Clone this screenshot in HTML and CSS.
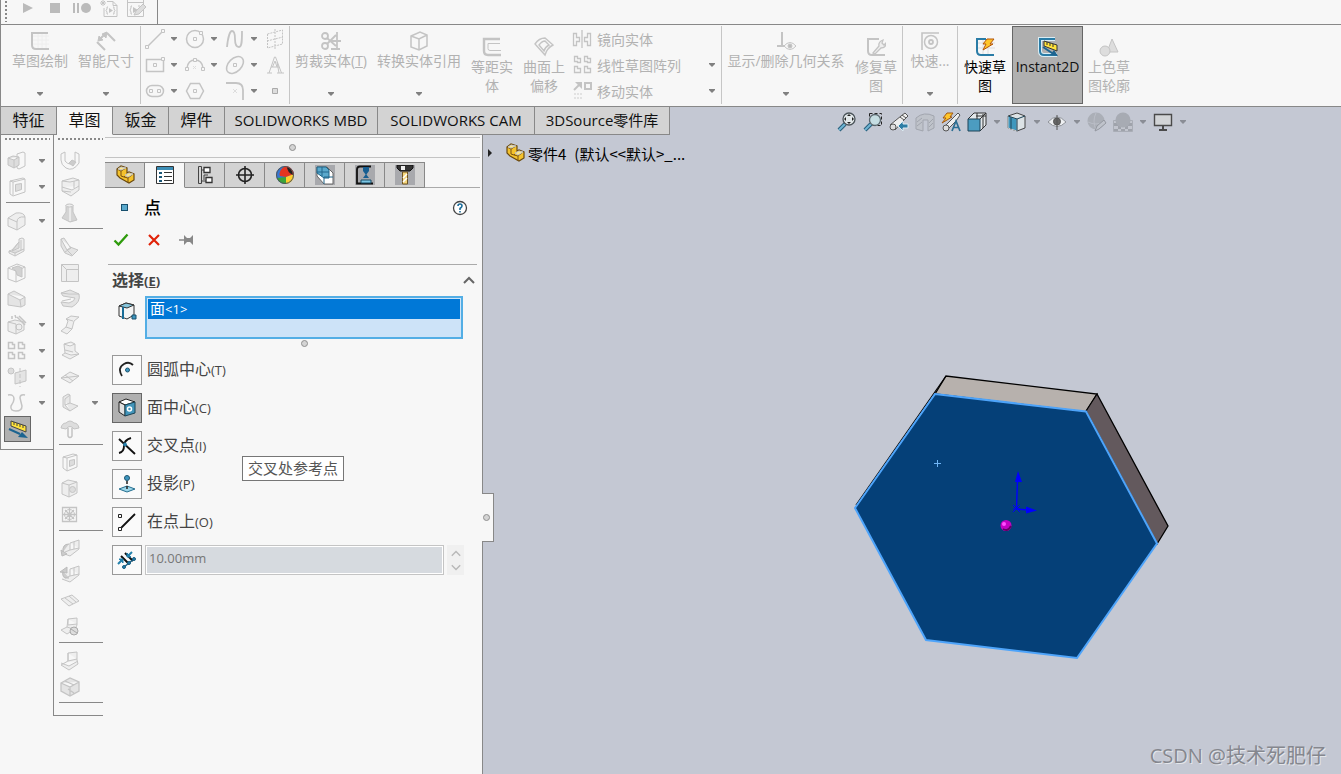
FILE: index.html
```html
<!DOCTYPE html>
<html lang="zh-CN">
<head>
<meta charset="utf-8">
<title>零件4</title>
<meta name="viewport" content="width=device-width, initial-scale=1">
<link rel="stylesheet" href="styles.css">
</head>
<body>
<svg class="defs" aria-hidden="true">
  <symbol id="caret" viewBox="0 0 6 4"><path d="M0 0h6v1L3 4 0 1z" fill="currentColor"/></symbol>
  <symbol id="part" viewBox="0 0 20 20"><path d="M2 4l4-3 6 2v5l2-1 5 2v6l-5 3-9-5-3-3z" fill="#f4c22c" stroke="#6b4a10" stroke-width="1.200"/><path d="M2 4l4 2 5-3M6 6v5l3 1 4-4M9 12l4 1 5-4M13 13v5" fill="none" stroke="#7a5312"/><path d="M3 4l3-2 5 1-5 2zM10 10l4-2 4 1-5 3z" fill="#fde88a"/></symbol>
</svg>

<header class="macro">
  <div class="macro-bar">
    <span class="grip-v"></span>
    <button class="tool" aria-label="运行"><svg class="i" viewBox="0 0 20 20"><path d="M5 3l10 5-10 5z" fill="#bbb" stroke="none"/></svg></button>
    <button class="tool" aria-label="停止"><svg class="i" viewBox="0 0 20 20"><path d="M5 3h10v10H5z" fill="#bbb" stroke="none"/></svg></button>
    <button class="tool" aria-label="录制"><svg class="i" viewBox="0 0 20 20"><path d="M1 3h2v10H1zM5 3h2v10H5z" fill="#bbb" stroke="none"/><circle cx="14" cy="8" r="5" fill="#bbb" stroke="none"/></svg></button>
    <button class="tool" aria-label="新建宏"><svg class="i" viewBox="0 0 20 20"><path d="M8 1.500h6l4 4v11H5V8M14 1.500v4h4M4 0v6M1 3h6M2 1l4 4M6 1L2 5M9 7H8v2l-1 1.500 1 1.500v2h1M14 7h1v2l1 1.500-1 1.500v2h-1"/><path d="M10 8l4 2.500-4 2.500z" fill="#c4c4c4" stroke="none"/></svg></button>
    <button class="tool" aria-label="编辑宏"><svg class="i" viewBox="0 0 20 20"><path d="M1.500 0v16.500h16V0M1 2.500h17M6 6H5v2l-1 2 1 2v2h1M12 6h2"/><path d="M7 7l5 3-5 3z" fill="#c4c4c4" stroke="none"/><path d="M8 15l2-4 7-7 3 3-7 7z" fill="#ddd"/></svg></button>
  </div>
</header>

<nav class="ribbon" aria-label="草图工具">
  <section class="group g-main">
    <button class="rb w66"><svg class="i" viewBox="0 0 20 20"><path d="M8 1v18M12 1v18M16 1v18M3 5h16M3 9h16M3 13h16" stroke="#eee"/><path d="M18 2H2v12q0 4 4 4h13" stroke-width="2"/></svg><span>草图绘制</span><svg class="c"><use href="#caret"/></svg></button>
    <button class="rb w66"><svg class="i" viewBox="0 0 20 20"><path d="M3 9l7-7M1 11l8 8M11 2l8 8" stroke-width="2"/><path d="M2 10l5-1-4-4zM11 1L6 3l4 4z" fill="#c4c4c4"/></svg><span>智能尺寸</span><svg class="c"><use href="#caret"/></svg></button>
  </section>
  <section class="group sketch-grid">
    <button class="sk"><svg class="i" viewBox="0 0 20 20"><path d="M3 17L17 3" stroke-width="1.500"/><path d="M.5 16.500h3v3h-3zM16.500 .5h3v3h-3z" fill="#f7f7f7"/></svg><svg class="c"><use href="#caret"/></svg></button>
    <button class="sk"><svg class="i" viewBox="0 0 20 20"><circle cx="10" cy="10" r="8.500" stroke-width="1.500"/><path d="M8.500 8.500h3v3h-3zM14.500 2.500h3v3h-3z" fill="#f7f7f7"/></svg><svg class="c"><use href="#caret"/></svg></button>
    <button class="sk"><svg class="i" viewBox="0 0 20 20"><path d="M2 18C3 8 5 2 7 2s3 3 3 8 1 8 4 8 3-6 3-16" stroke-width="1.800"/></svg><svg class="c"><use href="#caret"/></svg></button>
    <button class="sk"><svg class="i" viewBox="0 0 20 20"><path d="M2.500 5l15-4v14l-15 4zM10 0v20M2 12l16-4" stroke-dasharray="2 1"/></svg></button>
    <button class="sk"><svg class="i" viewBox="0 0 20 20"><path d="M1.500 4.500h17v12h-17z" stroke-width="1.500"/><path d="M8.500 8.500h3v3h-3zM16.500 2.500h3v3h-3z" fill="#f7f7f7"/></svg><svg class="c"><use href="#caret"/></svg></button>
    <button class="sk"><svg class="i" viewBox="0 0 20 20"><path d="M2 13q1-8 8-8t8 8" stroke-width="1.500"/><path d="M.5 12.500h3v3h-3zM16.500 12.500h3v3h-3zM8.500 3.500h3v3h-3z" fill="#f7f7f7"/><path d="M8 11l3 3M11 11l-3 3" stroke="#ddd"/></svg><svg class="c"><use href="#caret"/></svg></button>
    <button class="sk"><svg class="i" viewBox="0 0 20 20"><ellipse cx="10" cy="10" rx="10" ry="6.500" transform="rotate(-45 10 10)" stroke-width="1.500"/><path d="M8.500 8.500h3v3h-3z"/></svg><svg class="c"><use href="#caret"/></svg></button>
    <button class="sk"><svg class="i" viewBox="0 0 20 20"><path d="M2 18h5M12 18h7M4 18L9.500 2h1l6 16M6 12h8M12 7l2 11M7.500 12L10 6l2 6"/></svg></button>
    <button class="sk"><svg class="i" viewBox="0 0 20 20"><rect x="1.500" y="4.500" width="17" height="11" rx="5.500" stroke-width="1.500"/><path d="M4.500 8.500h3v3h-3zM12.500 8.500h3v3h-3z"/></svg><svg class="c"><use href="#caret"/></svg></button>
    <button class="sk"><svg class="i" viewBox="0 0 20 20"><path d="M5.500 2.500h9l4 7.500-4 7.500h-9L1.500 10z" stroke-width="1.500"/><path d="M8.500 8.500h3v3h-3z"/></svg></button>
    <button class="sk"><svg class="i" viewBox="0 0 20 20"><path d="M1 2h10q7 0 7 7v10" stroke-width="1.800"/><path d="M8 8l4 4M12 8l-4 4" stroke="#ddd"/></svg><svg class="c"><use href="#caret"/></svg></button>
    <button class="sk"><svg class="i" viewBox="0 0 20 20"><path d="M7.500 7.500h5v5h-5z" fill="#ddd" stroke="#aaa"/></svg></button>
  </section>
  <section class="group">
    <button class="rb w82"><svg class="i" viewBox="0 0 20 20"><circle cx="4" cy="5" r="3" stroke-width="1.800"/><circle cx="4" cy="15" r="3" stroke-width="1.800"/><path d="M6 7l9 8M6 13l9-9M10 10h10M16 1v18M10 18h9" stroke-width="1.800"/></svg><span>剪裁实体(<u>T</u>)</span><svg class="c"><use href="#caret"/></svg></button>
    <button class="rb w94"><svg class="i" viewBox="0 0 20 20"><path d="M2 5l9-4 7 3v11l-8 4-8-3zM2 5l8 3 8-4M10 8v11" stroke-width="1.500"/></svg><span>转换实体引用</span><svg class="c"><use href="#caret"/></svg></button>
    <button class="rb two w52"><svg class="i" viewBox="0 0 20 20"><path d="M18 2H2v12q0 4 4 4h13" stroke-width="2.400"/><path d="M18 6.500H6v5q0 2 2 2h11"/></svg><span>等距实<br>体</span></button>
    <button class="rb two w52"><svg class="i" viewBox="0 0 20 20"><path d="M1 7q4-6 10-6l8 7q-6 3-8 10zM5 8q3-4 6-4l4 4q-4 2-5 6z" stroke-width="1.400"/></svg><span>曲面上<br>偏移</span></button>
    <div class="stack">
      <button class="line"><svg class="i" viewBox="0 0 20 20"><path d="M10 1v18M1.500 4.500h3v4h3v4h-3v4h-3zM18.500 4.500h-3v4h-3v4h3v4h3z" stroke-width="1.300"/></svg><span>镜向实体</span></button>
      <button class="line"><svg class="i" viewBox="0 0 20 20"><path d="M2.500 1.500h3v2h3v4h-3v-1h-3zM12.500 1.500h3v2h3v4h-3v-1h-3zM2.500 11.500h3v2h3v4h-6zM12.500 11.500h3v2h3v4h-6z" stroke-width="1.300"/></svg><span>线性草图阵列</span><svg class="c"><use href="#caret"/></svg></button>
      <button class="line"><svg class="i" viewBox="0 0 20 20"><path d="M2 9l6-6" stroke-width="2"/><path d="M3 1h7v7z" fill="#c4c4c4" stroke="none"/><path d="M13 2h6v6h-6z" stroke-width="2"/><path d="M2 13h8M2 17h8" stroke-width="2" stroke-dasharray="2 1" stroke="#e2e2e2"/></svg><span>移动实体</span><svg class="c"><use href="#caret"/></svg></button>
    </div>
  </section>
  <section class="group">
    <button class="rb w128"><svg class="i" viewBox="0 0 20 20"><path d="M6 1v14M1 15h8" stroke-width="2"/><path d="M8 15q6-7 12 0-6 7-12 0z"/><circle cx="14" cy="15" r="2" fill="#bbb"/></svg><span>显示/删除几何关系</span><svg class="c"><use href="#caret"/></svg></button>
    <button class="rb two w52"><svg class="i" viewBox="0 0 20 20"><path d="M13 2H2v12q0 4 4 4h13" stroke-width="2"/><path d="M7 16l6-7q-1-4 4-6l-1 3 2 2 2-2q0 5-5 5l-6 6z" fill="#eee" stroke-width="1.300"/></svg><span>修复草<br>图</span></button>
  </section>
  <section class="group">
    <button class="rb w54"><svg class="i" viewBox="0 0 20 20"><path d="M2 19V2h17" stroke-width="1.600"/><circle cx="11" cy="11" r="6.500" stroke-width="1.500"/><circle cx="11" cy="11" r="2" stroke-width="1.800"/></svg><span>快速...</span><svg class="c"><use href="#caret"/></svg></button>
  </section>
  <section class="group last">
    <button class="rb two w54 on"><svg class="i" viewBox="0 0 20 20"><path d="M8 1v18M13 1v18M3 6h17M3 11h17" stroke="#ddd"/><path d="M11 2H2v12q0 4 4 4h13" stroke="#2a7ca6" stroke-width="2"/><path d="M12 2h7l-4 5h3L8 13l3-6H8z" fill="#ffc629" stroke="#b4540a"/></svg><span>快速草<br>图</span></button>
    <button class="rb two pressed"><svg class="i" viewBox="0 0 20 20"><path d="M17 2H2v12q0 4 4 4h13" stroke="#d9edf5" stroke-width="4"/><path d="M17 2H2v12q0 4 4 4h13" stroke="#2a7ca6" stroke-width="2"/><path d="M6 4l13 4v6L6 9z" fill="#ffe23b" stroke="#333"/><path d="M9 5v3M12 6v3M15 7v3" stroke="#333"/><path d="M5 10l9 6" stroke="#1c6490" stroke-width="2"/><path d="M12 18l8 1-4-6z" fill="#1c6490" stroke="none"/></svg><span>Instant2D</span></button>
    <button class="rb two w52"><svg class="i" viewBox="0 0 20 20"><path d="M13 2l6 13H8z" fill="#ddd"/><circle cx="6" cy="14" r="5" fill="#ddd"/></svg><span>上色草<br>图轮廓</span></button>
  </section>
</nav>

<div class="tabrow">
  <nav class="tabs" aria-label="命令选项卡">
    <button class="tab">特征</button><button class="tab active">草图</button><button class="tab">钣金</button><button class="tab">焊件</button><button class="tab mbd">SOLIDWORKS MBD</button><button class="tab cam">SOLIDWORKS CAM</button><button class="tab src">3DSource零件库</button>
  </nav>
  <div class="view-tools">
    <button class="tool" aria-label="整屏显示全图"><svg class="i" viewBox="0 0 20 20"><path d="M2 18l6-6" stroke="#285f7c" stroke-width="4"/><path d="M2 18l6-6" stroke="#6fb5d3" stroke-width="2"/><circle cx="12" cy="7" r="6" fill="#e2e8ea" stroke="#4b5459" stroke-width="1.300"/><path d="M12 2l2 2h-4zM12 12l2-2h-4zM7 7l2-2v4zM17 7l-2-2v4z" fill="#222" stroke="none"/></svg></button>
    <button class="tool" aria-label="局部放大"><svg class="i" viewBox="0 0 20 20"><path d="M6.500 1.500h12v12h-12z" stroke="#222" stroke-dasharray="3 2"/><path d="M2 18l6-6" stroke="#285f7c" stroke-width="4"/><path d="M2 18l6-6" stroke="#6fb5d3" stroke-width="2"/><circle cx="12" cy="8" r="5.500" fill="#c5dde2" stroke="#59666c" stroke-width="1.300"/></svg></button>
    <button class="tool" aria-label="上一视图"><svg class="i" viewBox="0 0 20 20"><path d="M1 13L12 4l4-3 3 3-4 4-9 10z" fill="#eee" stroke="#555"/><circle cx="4" cy="15" r="3" fill="#ddd" stroke="#555"/><path d="M11 5l4 3M13 3l4 3" stroke="#555"/><path d="M19 12h-5V9l-5 5 5 5v-3h5z" fill="#2c7da5" stroke="#dcebf2"/></svg></button>
    <button class="tool dim" aria-label="剖面视图"><svg class="i" viewBox="0 0 20 20"><path d="M1 6q8-7 18-2v12l-6 3V8H8v11l-7-2z" fill="#bfc2c9" stroke="#999da5"/><path d="M2 10l5-4M2 14l5-4M14 11l4-4M14 15l4-4" stroke="#999da5"/></svg></button>
    <button class="tool" aria-label="动态注解视图"><svg class="i" viewBox="0 0 20 20"><path d="M3 15L14 4l3-3 2 2-4 6-9 9z" fill="#eee" stroke="#555"/><circle cx="5" cy="16" r="3" fill="#ddd" stroke="#555"/><path d="M6 1h6l-3 4h2L1 11l4-5H2z" fill="#ffc629" stroke="#a15814"/><path d="M11 19l4-10 4 10M12.500 15.500h5" stroke="#2c6e93" stroke-width="1.700"/></svg></button>
    <button class="tool" aria-label="视图定向"><svg class="i" viewBox="0 0 20 20"><path d="M1 7l6-6h12v12l-6 6" fill="#e3e7ea" stroke="#333"/><path d="M1 7h12v12H1z" fill="#4c9cc0" stroke="#1e4559"/><path d="M13 7l6-6M10 1v6M16 2v14M9 4h10" stroke="#333"/></svg></button>
    <svg class="c"><use href="#caret"/></svg>
    <button class="tool" aria-label="显示样式"><svg class="i" viewBox="0 0 20 20"><path d="M1 4l9-3 8 3v12l-8 3-9-3z" fill="#dce2e5" stroke="#444"/><path d="M1 4l9 3v12l-9-3z" fill="#3f97bd"/><path d="M1 4l9 3 8-3M10 7v12M4 5v12" stroke="#1e4559"/></svg></button>
    <svg class="c"><use href="#caret"/></svg>
    <button class="tool" aria-label="隐藏/显示项目"><svg class="i" viewBox="0 0 20 20"><path d="M1 10q9-10 18 0-9 9-18 0z" fill="#eef0f2" stroke="#8d9198"/><circle cx="10" cy="9.500" r="3.500" fill="#666" stroke="#555"/><path d="M10 3v15" stroke="#555"/></svg></button>
    <svg class="c"><use href="#caret"/></svg>
    <button class="tool dim" aria-label="编辑外观"><svg class="i" viewBox="0 0 20 20"><circle cx="9" cy="9" r="8.500" fill="#a5a9b1" stroke="none"/><path d="M1 10q8 4 16 0M9 1q-4 8 0 17" stroke="#b9bcc4"/><path d="M8 19l2-5 7-6 2 3-7 6z" fill="#bfc2ca" stroke="#898d94"/></svg></button>
    <button class="tool dim" aria-label="应用布景"><svg class="i" viewBox="0 0 20 20"><path d="M.5 8.500h19v11H.5z" fill="#c2c5cd" stroke="#a3a7af"/><path d="M1 11h4v3H1zM15 11h4v3h-4zM5 14h3v3H5zM12 14h3v3h-3zM1 17h4v2H1zM8 17h4v2H8zM15 17h4v2h-4z" fill="#969aa2" stroke="none"/><circle cx="10" cy="8" r="7.500" fill="#a0a4ac" stroke="none"/></svg></button>
    <svg class="c"><use href="#caret"/></svg>
    <button class="tool" aria-label="视图设定"><svg class="i" viewBox="0 0 20 20"><path d="M1.500 2.500h17v11h-17z" fill="#d2d4d6" stroke="#4a4a4a" stroke-width="1.400"/><path d="M10 14v4M6 18h8" stroke="#4a4a4a" stroke-width="2"/></svg></button>
    <svg class="c"><use href="#caret"/></svg>
  </div>
</div>

<main class="work">
  <aside class="side">
    <div class="rail first" role="toolbar" aria-label="特征">
      <span class="grip"></span>
      <button class="rt"><svg class="i" viewBox="0 0 20 20"><path d="M10 3l6-2 2 1v13l-6 3-2-1z"/><path d="M1 7l5-2 6 1v8l-5 3-6-3zM1 7l6 2 5-3M7 9v8" fill="#ddd"/></svg><svg class="c"><use href="#caret"/></svg></button>
      <button class="rt"><svg class="i" viewBox="0 0 20 20"><path d="M3 4l13-3 2 1v13l-12 4-3-2zM6 5v13M3 4l3 1 12-3"/><path d="M8.500 7.500l6-1v6l-6 2z" fill="#ddd"/></svg><svg class="c"><use href="#caret"/></svg></button>
      <hr>
      <button class="rt"><svg class="i" viewBox="0 0 20 20"><path d="M1 7l8-5q8-1 9 4v8l-8 5-9-4zM1 7l9 4v8M10 11q0-6 8-5" fill="#eee"/></svg><svg class="c"><use href="#caret"/></svg></button>
      <button class="rt"><svg class="i" viewBox="0 0 20 20"><path d="M12 2l3-1 2 1v12l-9 5-6-3v-2l3-1 7-8z" fill="#eee"/><path d="M12 5v6l-7 3zM2 14l6 2 9-4M8 16v3M14 3v10" fill="#ddd"/></svg></button>
      <button class="rt"><svg class="i" viewBox="0 0 20 20"><path d="M1 5l9-4 8 3v11l-9 4-8-3zM1 5l8 3v11M9 8l9-4"/><path d="M5 5l6-2 4 2v9l-5-2-1-4z" fill="#d2d2d2"/></svg></button>
      <button class="rt"><svg class="i" viewBox="0 0 20 20"><path d="M1 5l6-3 11 6v8l-4 2-13-2zM1 5l12 6 5-3M13 11l1 7" fill="#e4e4e4"/></svg></button>
      <button class="rt"><svg class="i" viewBox="0 0 20 20"><path d="M1 7l7-2 9 2v8l-8 4-8-3zM1 7l8 2v10" fill="#eee"/><circle cx="12" cy="12" r="3"/><path d="M10 2l8 8M12 1l7 7M5 1v3M8 0l1 3" stroke-width="1.500"/></svg><svg class="c"><use href="#caret"/></svg></button>
      <button class="rt"><svg class="i" viewBox="0 0 20 20"><path d="M1.500 1.500h4v2h2v4h-6zM11.500 1.500h4v2h2v4h-6zM1.500 11.500h4v2h2v4h-6zM11.500 11.500h4v2h2v4h-6z" stroke-width="1.500"/></svg><svg class="c"><use href="#caret"/></svg></button>
      <button class="rt"><svg class="i" viewBox="0 0 20 20"><circle cx="4" cy="4" r="3" fill="#ddd"/><path d="M8 6l11-3v11L8 17z" fill="#e4e4e4"/><path d="M13 1v19" stroke-dasharray="4 2"/></svg><svg class="c"><use href="#caret"/></svg></button>
      <button class="rt"><svg class="i" viewBox="0 0 20 20"><path d="M1 2q6-1 6 4 0 3-3 7-1 5 5 5t6-5l-2-8q0-4 5-3" stroke-width="1.500"/></svg><svg class="c"><use href="#caret"/></svg></button>
      <button class="rt chosen" aria-label="Instant3D"><svg class="i" viewBox="0 0 20 20"><path d="M3 2l15 5v6L3 7z" fill="#ffe23b" stroke="#444"/><path d="M6 3v3M9 4v3M12 5v3M15 6v3" stroke="#444"/><path d="M1 10l11 5" stroke="#1c6490" stroke-width="2"/><path d="M10 18l10 1-6-6z" fill="#1c6490" stroke="none"/></svg></button>
    </div>
    <div class="rail second" role="toolbar" aria-label="钣金">
      <span class="grip"></span>
      <button class="rt"><svg class="i" viewBox="0 0 20 20"><path d="M1 3l4-2v9q5 6 10 0V1l4 2v9q-6 9-13 5-5-3-5-8z"/><path d="M9 12l3-3 4 2-3 4z" fill="#ccc"/></svg></button>
      <button class="rt"><svg class="i" viewBox="0 0 20 20"><path d="M2 4l11-3 6 2v10l-8 6-9-5zM2 4l8 1 9-2M2 10l10 3 7-4M14 4v7M2 14l9 1" fill="#eee"/></svg></button>
      <button class="rt"><svg class="i" viewBox="0 0 20 20"><path d="M6 2h7v7l4 8-7 2-8-4 4-6z" fill="#d4d4d4"/><path d="M10 3v15" stroke="#fff"/><ellipse cx="9.500" cy="2.500" rx="3.500" ry="1.500" fill="#eee"/></svg></button>
      <hr>
      <button class="rt"><svg class="i" viewBox="0 0 20 20"><path d="M1 2l3-1 6 9 8 3-6 6-7-3-4-7zM1 2l6 11 4-3M7 13l5 5M5 15l6-4" fill="#e4e4e4"/></svg></button>
      <button class="rt"><svg class="i" viewBox="0 0 20 20"><path d="M1.500 1.500h17v17h-17zM1.500 1.500l5 5M6.500 6.500h12M6.500 6.500v12" fill="#eee"/></svg></button>
      <button class="rt"><svg class="i" viewBox="0 0 20 20"><path d="M1 4l9-3 9 4q2 8-7 13l-9-1-2-4 8 1q6-2 6-5L3 7zM1 4l8 1 10 0M2 12l9-2" fill="#e4e4e4"/></svg></button>
      <button class="rt"><svg class="i" viewBox="0 0 20 20"><path d="M6 4l5-3 8 1-5 4-2 8-5 5-6-3 5-4 2-6zM6 4l7 2M6 12l6 2" fill="#eee"/></svg></button>
      <button class="rt"><svg class="i" viewBox="0 0 20 20"><path d="M4 3l7-2 4 2v7l4 3-9 5-8-4 3-2zM4 3l6 2 5-2M5 12l6 2 8-1M5 9l8 2" fill="#eee"/></svg></button>
      <button class="rt"><svg class="i" viewBox="0 0 20 20"><path d="M1 11l9-6 9 4-9 7zM5 8l8 6M1 11l18-2" fill="#eee"/></svg></button>
      <button class="rt"><svg class="i" viewBox="0 0 20 20"><path d="M3 4l5-3 2 1v8l8 3-8 5-7-4zM5 6l5-4M5 6v6l5 6M5 12l5-2" fill="#e8e8e8"/></svg><svg class="c"><use href="#caret"/></svg></button>
      <button class="rt"><svg class="i" viewBox="0 0 20 20"><path d="M1 9q1-5 5-5 4-4 8 0 4 0 5 5l-5 1q-4-5-8 0z" fill="#ddd"/><path d="M8 9v8q2 3 4 0V9" stroke-width="1.500"/></svg></button>
      <hr>
      <button class="rt"><svg class="i" viewBox="0 0 20 20"><path d="M3 4l10-3 4 1v12L7 18l-4-3zM7 5v13M3 4l4 1 10-3"/><path d="M9.500 7.500l5-1v5l-5 2z" fill="#ddd"/></svg></button>
      <button class="rt"><svg class="i" viewBox="0 0 20 20"><path d="M2 4l6-3 9 2v11l-8 4-7-3zM2 4l7 2v12M9 6l8-3" fill="#eee"/><circle cx="12.500" cy="10.500" r="3" fill="#ddd"/></svg></button>
      <button class="rt"><svg class="i" viewBox="0 0 20 20"><path d="M2.500 2.500h14v14h-14zM9.500 2.500v14M2.500 9.500h14M5 5l9 9M14 5l-9 9" stroke-width="1.300"/><circle cx="9.500" cy="9.500" r="5"/></svg></button>
      <hr>
      <button class="rt"><svg class="i" viewBox="0 0 20 20"><path d="M10 4l9-3v9l-9 7-8-3M10 4v7l9-2M10 11l-5 2M14 3v7" fill="#eee"/><path d="M9 5q-7 0-6 8M1 11l6 4-5 2z" fill="#ccc" stroke="#bbb"/></svg></button>
      <button class="rt"><svg class="i" viewBox="0 0 20 20"><path d="M10 4l9-3v9l-9 7-8-3M10 4v7l9-2M10 11l-5 2M14 3v7" fill="#eee"/><path d="M9 13Q1 14 3 6M0 7l7-5v6z" fill="#ccc" stroke="#bbb"/></svg></button>
      <button class="rt"><svg class="i" viewBox="0 0 20 20"><path d="M1 8l11-4 7 6-10 5zM5 7l8 6M9 5l7 6" fill="#eee"/></svg></button>
      <button class="rt"><svg class="i" viewBox="0 0 20 20"><path d="M8 2l9-1v7l-2 4-8 5-6-4 6-3zM8 2v6l9-1M7 10l6 2" fill="#eee"/><circle cx="14" cy="14" r="4" fill="#ddd" stroke="#aaa"/><path d="M11 12l6 4" stroke="#aaa"/></svg></button>
      <hr>
      <button class="rt"><svg class="i" viewBox="0 0 20 20"><path d="M8 2l9-1v8l1 4-9 6-8-5 7-4zM8 2v8l9-2M1 12l8 3 9-5" fill="#eee"/></svg></button>
      <button class="rt"><svg class="i" viewBox="0 0 20 20"><path d="M1 6l9-5 9 4v9l-9 5-9-5zM1 6l9 4 9-5M10 10v9M5 4l9 4M8 12l6 4" fill="#e4e4e4" stroke-width="1.300"/></svg></button>
      <hr>
    </div>

    <section class="panel">
      <div class="splitter"><span class="dot"></span></div>
      <nav class="ptabs" aria-label="管理器">
        <button class="ptab" aria-label="特征管理器"><svg class="i"><use href="#part"/></svg></button>
        <button class="ptab active" aria-label="属性管理器"><svg class="i" viewBox="0 0 20 20"><path d="M1.500 1.500h17v17h-17z" fill="#fff" stroke="#333"/><path d="M2 2h16v3H2z" fill="#3b8db5" stroke="none"/><path d="M4 8h3M4 12h3M4 16h3" stroke="#1c5878" stroke-width="2"/><path d="M9 7.500h8M9 11.500h8M9 15.500h8" stroke="#333"/></svg></button>
        <button class="ptab" aria-label="配置管理器"><svg class="i" viewBox="0 0 20 20"><path d="M3.500 1.500h3v17h-3zM6 5h4M6 16h6M13 10H9v5" stroke="#444"/><path d="M9 2.500h6v5H9zM11 12.500h6v5h-6z" fill="#fff" stroke="#333" stroke-width="1.300"/></svg></button>
        <button class="ptab" aria-label="尺寸专家"><svg class="i" viewBox="0 0 20 20"><circle cx="10" cy="10" r="6.500" stroke="#222" stroke-width="1.600"/><path d="M10 1v18M1 10h18" stroke="#222" stroke-width="1.600"/></svg></button>
        <button class="ptab" aria-label="外观管理器"><svg class="i" viewBox="0 0 20 20"><circle cx="10" cy="10" r="9" fill="#3478d4" stroke="none"/><path d="M10 1q-7 5-5 10l6 1 8-3q-2-8-9-8z" fill="#e43520" stroke="none"/><path d="M2 13l9-1 1 7Q4 19 2 13z" fill="#3ba53a" stroke="none"/><path d="M11 12l8-3q0 9-8 10z" fill="#ffcf2e" stroke="none"/><path d="M12 2q5 1 6 8-6-3-6-8z" fill="#222" stroke="none"/><circle cx="10" cy="10" r="8.500" stroke="#555"/></svg></button>
        <button class="ptab" aria-label="CAM 特征树"><svg class="i" viewBox="0 0 20 20"><path d="M0 0h20v20H0z" fill="#a8a9ad" stroke="none"/><path d="M2 2h10l6 6v11H9L2 11z" fill="#fff" stroke="#666"/><path d="M2 2h9l3 3v8H9L2 8z" fill="#5aa9cc" stroke="#1c6488"/><path d="M7 2v9M2 7h12M9 19v-7h9" stroke="#23668b"/></svg></button>
        <button class="ptab" aria-label="CAM 操作树"><svg class="i" viewBox="0 0 20 20"><path d="M0 0h20v20H0z" fill="#a8a9ad" stroke="none"/><path d="M16 1.500H5q-3 0-3 3v14h16" stroke="#111" stroke-width="1.800"/><path d="M8 2h6v4l-3 4-3-4z" fill="#175e91" stroke="none"/><path d="M11 9l3 4H8z" fill="#175e91" stroke="none"/><path d="M6 15h10v3H6z" fill="#7bc6e4" stroke="#1a4d66"/></svg></button>
        <button class="ptab" aria-label="CAM 刀具树"><svg class="i" viewBox="0 0 20 20"><path d="M0 0h20v20H0z" fill="#a8a9ad" stroke="none"/><path d="M2 0h16v3l-3 3H5L2 3z" fill="#333" stroke="#111"/><path d="M6 1h4v4H6z" fill="#eee" stroke="none"/><path d="M7.500 7h5v12h-5z" fill="#f6d77b" stroke="#705522"/><path d="M8 13l4-4M8 17l4-4" stroke="#fff" stroke-width="1.500"/></svg></button>
      </nav>
      <header class="ptitle"><span class="pt"></span><h1>点</h1><button class="tool" aria-label="帮助"><svg class="i" viewBox="0 0 20 20"><circle cx="10" cy="10" r="6.500" fill="#fff" stroke="#444" stroke-width="1.300"/><path d="M8 8q0-2 2-2t2 2q0 1-2 2.500V12M10 13v1.500" stroke="#1b6e9c" stroke-width="1.600"/></svg></button></header>
      <div class="actions">
        <button class="tool" aria-label="确定"><svg class="i" viewBox="0 0 20 20"><path d="M3.500 10.500l4 4 9-10" stroke="#2e9b0c" stroke-width="2.300"/></svg></button>
        <button class="tool" aria-label="取消"><svg class="i" viewBox="0 0 20 20"><path d="M5 5l10 10M15 5L5 15" stroke="#e02208" stroke-width="2.200"/></svg></button>
        <button class="tool" aria-label="保持可见"><svg class="i" viewBox="0 0 20 20"><path d="M2 10h6" stroke="#888" stroke-width="1.500"/><path d="M7 5l3 3h3l3-3v10l-3-3h-3l-3 3z" fill="#888" stroke="none"/></svg></button>
      </div>
      <section class="select">
        <button class="sect"><span>选择<small>(<u>E</u>)</small></span><svg class="i chev" viewBox="0 0 20 20"><path d="M5 12l5-5 5 5" stroke="#666" stroke-width="2"/></svg></button>
        <div class="pick">
          <svg class="i" viewBox="0 0 20 20"><path d="M2 5l7-3 8 2v10l-7 4-8-3z" fill="#f4f4f4" stroke="#333"/><path d="M2 5l7-3 8 2-7 3z" fill="#86c5dc" stroke="#333"/><path d="M6 6v12" stroke="#186b96" stroke-width="2"/><path d="M15 14h4v4h-4z" fill="#3e96bf" stroke="#184f6b"/></svg>
          <div class="listbox" role="listbox" aria-label="选择" tabindex="0"><div class="item" role="option" aria-selected="true">面<small>&lt;1&gt;</small></div></div>
        </div>
        <span class="dot mini"></span>
        <div class="options">
          <button class="option"><span class="box"><svg class="i" viewBox="0 0 20 20"><path d="M5 16Q0 8 7 4q5-3 9 1" stroke="#222" stroke-width="1.800"/><circle cx="10.500" cy="10" r="2" fill="#3e96bf" stroke="#1d5570"/></svg></span><span>圆弧中心<small>(T)</small></span></button>
          <button class="option sel"><span class="box"><svg class="i" viewBox="0 0 20 20"><path d="M2 4l7-3 9 3-10 3z" fill="#fff" stroke="#222"/><path d="M2 4l6 3v11l-6-4z" fill="#e2e2e2" stroke="#222"/><path d="M8 7l10-3v11l-10 3z" fill="#4395ba" stroke="#1b4456"/><circle cx="12.500" cy="11" r="2" fill="#4395ba" stroke="#fff" stroke-width="1.500"/></svg></span><span>面中心<small>(C)</small></span></button>
          <button class="option"><span class="box"><svg class="i" viewBox="0 0 20 20"><path d="M2 3l16 15M2 17q5-1 5-7t7-8" stroke="#111" stroke-width="1.900"/><circle cx="8" cy="8.500" r="1.500" fill="#2981ad" stroke="#2981ad"/></svg></span><span>交叉点<small>(I)</small></span></button>
          <button class="option"><span class="box"><svg class="i" viewBox="0 0 20 20"><path d="M2 15l8-3 8 3-8 3z" fill="#9cd6e9" stroke="#256f90"/><path d="M10 7v9" stroke="#222" stroke-width="1.500" stroke-dasharray="3 2"/><circle cx="10" cy="4" r="2.500" fill="#3e96bf" stroke="#1d5570"/></svg></span><span>投影<small>(P)</small></span></button>
          <button class="option"><span class="box"><svg class="i" viewBox="0 0 20 20"><path d="M4 16L18 2" stroke="#111" stroke-width="1.800"/><path d="M1.500 2.500h3v3h-3zM1.500 15.500h3v3h-3z" fill="#fff" stroke="#222"/></svg></span><span>在点上<small>(O)</small></span></button>
          <div class="distance">
            <button class="box" aria-label="沿曲线距离"><svg class="i" viewBox="0 0 20 20"><path d="M4 6l8 8M8 3l8 8" stroke="#111" stroke-width="2"/><path d="M7 17l10-8" stroke="#175c82" stroke-width="1.500"/><path d="M1 14l4-4M11 6l4-4" stroke="#2380ab" stroke-width="2"/><path d="M2 9h4v4zM10 3v4h4z" fill="#2380ab" stroke="#2380ab"/><g fill="#2380ab" stroke="#175c82"><circle cx="7" cy="17" r="1.500"/><circle cx="12" cy="13" r="1.500"/><circle cx="17" cy="9" r="1.500"/></g></svg></button>
            <input class="dist" type="text" value="10.00mm" aria-label="距离" disabled>
            <div class="spin"><button aria-label="增加"><svg class="i" viewBox="0 0 10 10"><path d="M2 7l3-3 3 3"/></svg></button><button aria-label="减少"><svg class="i" viewBox="0 0 10 10"><path d="M2 3l3 3 3-3"/></svg></button></div>
          </div>
        </div>
      </section>
      <div class="tip" role="tooltip">交叉处参考点</div>
    </section>
    <button class="handle" aria-label="折叠面板"><span class="dot"></span></button>
  </aside>

  <section class="viewport" aria-label="图形区域">
    <a class="tree" href="#"><svg class="arrow" viewBox="0 0 4 8"><path d="M0 0l4 4-4 4z" fill="#222"/></svg><svg class="i"><use href="#part"/></svg><span>零件4</span><span>(默认&lt;&lt;默认&gt;_...</span></a>
    <svg class="model" viewBox="853 373 318 288" role="img" aria-label="六棱柱">
      <path d="M935 394l11-18 151 18-11 18z" fill="#b7b1ad" stroke="#000" stroke-width="1.300"/>
      <path d="M1086 411l11-17 71 132-11 18z" fill="#63595d" stroke="#000" stroke-width="1.300"/>
      <path d="M946 376L856 505" stroke="#000" stroke-width="1.200"/>
      <path d="M935 394l151 17.500 71 132L1077 658l-151-18-71-132z" fill="#054078" stroke="#4ea4fa" stroke-width="2"/>
      <path d="M934 463.500h7M937.500 460v7" stroke="#6fb4f5"/>
      <path d="M1016.500 509l1-30M1016.500 509l12 1" stroke="#00f" stroke-width="1.400"/>
      <path d="M1018 471l4 11h-7zM1037 510.500l-11-4v7z" fill="#00f"/>
      <path d="M1013 509h7M1013 505l7 7M1020 505l-7 7" stroke="#00f"/>
      <circle cx="1006" cy="525.500" r="5.500" fill="#c300c3"/><circle cx="1004" cy="524" r="2" fill="#ff4dff"/><path d="M1003 529q5 3 8-3" stroke="#640064" stroke-width="2" fill="none"/>
    </svg>
    <div class="mark">CSDN @技术死肥仔</div>
  </section>
</main>
</body>
</html>
```
FILE: styles.css
```css
* { box-sizing: border-box; }
body {
  margin: 0;
  min-height: 100vh;
  display: flex;
  flex-direction: column;
  background: #f7f7f7;
  color: #222;
  font: 14px/19px "Open Sans", "Noto Sans CJK SC", sans-serif;
}
button {
  margin: 0;
  padding: 0;
  border: 0;
  background: none;
  color: inherit;
  font: inherit;
}
h1 { margin: 0; }
hr { margin: 2px 0 5px 5px; border: 0; height: 1px; background: #888; }
.defs { position: absolute; width: 0; height: 0; }
.i { display: block; flex: none; width: 20px; height: 20px; fill: none; stroke: #c4c4c4; }
.c { display: block; flex: none; width: 6px; height: 4px; color: #808080; }
.tool { display: flex; flex: none; }
.dot { width: 7px; height: 7px; border: 1px solid #909090; border-radius: 50%; background: #d4d4d4; }

.macro { border-bottom: 1px solid #888; }
.macro-bar {
  display: flex;
  align-items: flex-start;
  gap: 7px;
  width: 158px;
  height: 24px;
  border-left: 1px solid #888;
  border-right: 1px solid #888;
}
.grip-v {
  width: 4px;
  height: 22px;
  margin: 0 3px 0 3px;
  background: radial-gradient(circle, #888 1px, transparent 1px) 0 0 / 4px 4px;
}

.ribbon {
  display: flex;
  height: 82px;
  padding: 1px 0 2px 6px;
  border-left: 1px solid #888;
  border-bottom: 1px solid #888;
  color: #b2b2b2;
}
.group { display: flex; flex: none; border-right: 1px solid #c6c6c6; }
.g-main { padding-right: 1px; }
.last { border: 0; }
.rb { display: flex; flex-direction: column; align-items: center; flex: none; padding: 5px 0 8px; white-space: nowrap; }
.rb > .c { margin-top: auto; }
.rb.two { padding-top: 11px; }
.w66 { width: 66px; }
.w82 { width: 82px; }
.w94 { width: 94px; }
.w52 { width: 52px; }
.w54 { width: 54px; }
.w128 { width: 128px; }
.on { color: #000; }
.rb.pressed { width: 71px; padding-top: 10px; border: 1px solid #666; background: #b0b0b0; color: #111; }
.sketch-grid { display: grid; grid-template-columns: 40px 40px 40px 24px; grid-auto-rows: 26px; padding-left: 4px; }
.sk { display: flex; align-items: center; gap: 6px; }
.stack { display: flex; flex-direction: column; width: 151px; padding-left: 2px; }
.line { display: flex; align-items: center; gap: 5px; height: 26px; padding-right: 6px; }
.line .c { margin-left: auto; }

.tabrow { display: flex; justify-content: space-between; height: 28px; background: #c4c8d3; }
.tabs { display: flex; border-left: 1px solid #888; }
.tab {
  min-width: 56px;
  border-right: 1px solid #888;
  border-bottom: 1px solid #888;
  background: #d3d3d3;
  color: #111;
  font-size: 16px;
  white-space: nowrap;
}
.tab.active { background: #f7f7f7; border-bottom-color: #f7f7f7; }
.mbd { width: 153px; font-size: 15px; }
.cam { width: 157px; font-size: 15px; }
.src { width: 135px; font-size: 15px; }
.view-tools { display: flex; align-items: center; gap: 6px; margin-right: 154px; padding-top: 1px; }
.view-tools .c { margin: 0 1px; color: #8a8d95; }
.dim { opacity: 0.8; }

.work { display: flex; flex: 1; }
.side { position: relative; display: flex; align-items: flex-start; flex: none; width: 483px; border-right: 1px solid #888; }
.rail { display: flex; flex-direction: column; flex: none; border-left: 1px solid #888; border-bottom: 1px solid #888; }
.first { width: 53px; padding: 0 3px 7px 0; }
.second { width: 50px; padding-bottom: 7px; }
.grip {
  height: 4px;
  margin: 2px 0 7px 3px;
  background: radial-gradient(circle, #888 1px, transparent 1px) 0 0 / 4px 4px;
}
.rt { display: flex; align-items: center; gap: 12px; height: 26px; padding-left: 6px; }
.chosen { width: 27px; margin-left: 3px; padding-left: 3px; border: 1px solid #666; background: #b0b0b0; }

.panel { position: relative; flex: 1; margin: 2px 2px 0; }
.splitter { display: flex; justify-content: center; align-items: center; height: 21px; border-top: 1px solid #c4c4c4; border-bottom: 1px solid #c4c4c4; }
.ptabs { display: flex; margin-top: 4px; height: 26px; box-shadow: inset 0 -1px #aaa; }
.ptab {
  display: flex;
  justify-content: center;
  align-items: center;
  width: 40px;
  border: 1px solid #888;
  border-left: 0;
  background: #d3d3d3;
}
.ptab.active { background: #f7f7f7; border-bottom-color: #f7f7f7; }
.ptitle { display: flex; align-items: center; height: 39px; padding: 0 10px 0 16px; }
.pt { width: 7px; height: 7px; border: 1px solid #174f6d; background: #5aa9cc; }
.ptitle h1 { flex: 1; padding-left: 16px; font-size: 17px; font-weight: 500; color: #000; }
.actions { display: flex; gap: 13px; height: 37px; padding: 3px 0 0 6px; }
.select { margin: 0 3px; border-top: 1px solid #aaa; }
.sect { display: flex; justify-content: space-between; align-items: center; width: 100%; padding: 6px 0 5px 4px; color: #444; font-size: 16px; font-weight: 700; text-align: left; }
small { font-size: 13px; }
.chev { margin-right: -2px; }
.pick { display: flex; padding: 0 14px 0 9px; gap: 8px; }
.pick > .i { margin-top: 5px; }
.listbox { flex: 1; height: 43px; padding: 1px; border: 2px solid #53aee5; background: #cde3f8; }
.item { height: 20px; padding-left: 2px; background: #0078d7; color: #fff; font-size: 15px; line-height: 18px; }
.mini { display: block; margin: 1px auto 0 193px; }
.options { display: flex; flex-direction: column; gap: 8px; padding: 8px 13px 0 4px; }
.option { display: flex; align-items: center; gap: 5px; color: #444; font-size: 16px; }
.box { display: flex; flex: none; justify-content: center; align-items: center; width: 30px; height: 30px; border: 1px solid #999; background: #fafafa; }
.sel .box { border-color: #666; background: #b0b0b0; }
.distance { display: flex; gap: 3px; }
.dist { flex: 1; min-width: 0; padding: 0 3px 5px; border: 1px solid #c4c4c4; background: #d6dadf; box-shadow: inset 0 0 0 1px #fff; color: #777; font: 13px "Open Sans", sans-serif; }
.spin { display: flex; flex-direction: column; width: 17px; background: #f0f0f0; }
.spin button { display: flex; justify-content: center; align-items: center; flex: 1; }
.spin .i { width: 14px; height: 14px; stroke: #b8b8b8; stroke-width: 1; }
.tip { position: absolute; left: 137px; top: 319px; padding: 2px 5px; border: 1px solid #767676; background: #fff; color: #555; font-size: 15px; line-height: 19px; }
.handle { position: absolute; left: 482px; top: 358px; z-index: 1; display: flex; align-items: center; width: 12px; height: 49px; padding-left: 1px; border: 1px solid #888; border-left: 0; background: #f7f7f7; }

.viewport { position: relative; flex: 1; min-width: 0; overflow: hidden; background: #c4c8d3; }
.tree { display: inline-flex; align-items: center; padding: 8px 0 0 5px; color: #000; font-family: "Noto Sans CJK SC", sans-serif; font-size: 15px; text-decoration: none; white-space: nowrap; }
.tree .arrow { width: 4px; height: 8px; margin-right: 13px; }
.tree .i { margin-right: 3px; }
.tree span + span { margin-left: 8px; }
.model { position: absolute; left: 370px; top: 238px; width: 318px; height: 288px; }
.mark { position: absolute; right: 15px; bottom: 5px; color: #85878e; font-size: 20px; line-height: 27px; text-shadow: 1px 1px #e4e6ea; }
```
